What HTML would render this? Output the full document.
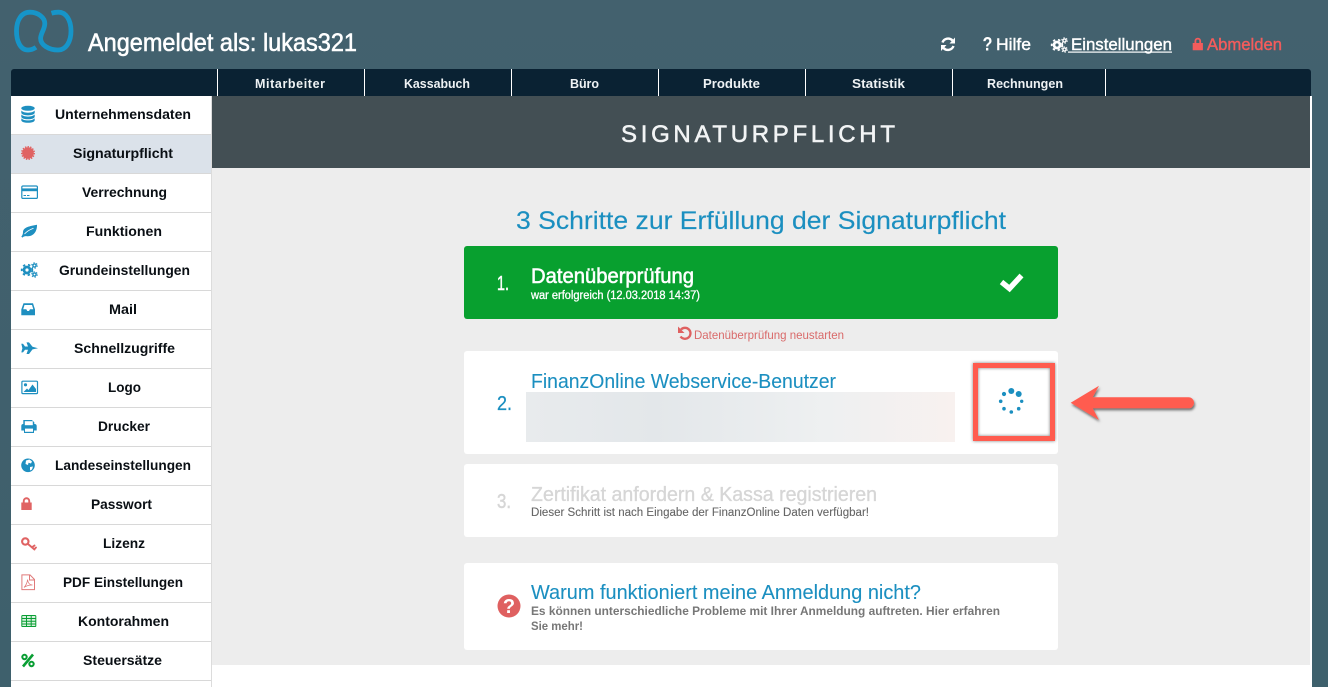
<!DOCTYPE html>
<html lang="de">
<head>
<meta charset="utf-8">
<title>Signaturpflicht</title>
<style>
html,body{margin:0;padding:0;width:1328px;height:687px;overflow:hidden;background:#40616e}
svg{display:block}
text{font-family:"Liberation Sans",sans-serif}
.side text{font-weight:bold;font-size:14px;fill:#0a0f14}
.nav text{font-weight:bold;font-size:12.5px;fill:#eef2f4}
.bl{fill:#1e8fc0}
.rd{fill:#e06363}
</style>
</head>
<body>
<svg xmlns="http://www.w3.org/2000/svg" width="1328" height="687" viewBox="0 0 1328 687">
<defs>
<linearGradient id="bg" x1="0" y1="0" x2="0" y2="1"><stop offset="0" stop-color="#43616e"/><stop offset="1" stop-color="#3e606c"/></linearGradient>
<linearGradient id="blur" x1="0" y1="0" x2="1" y2="0"><stop offset="0" stop-color="#e8ebed"/><stop offset=".3" stop-color="#e3e7ea"/><stop offset=".7" stop-color="#eef0f1"/><stop offset="1" stop-color="#f8f1ef"/></linearGradient>
<filter id="sh" x="-20%" y="-30%" width="140%" height="170%"><feDropShadow dx="1" dy="2" stdDeviation="1.2" flood-color="#000" flood-opacity=".55"/></filter>
<filter id="sh2" x="-10%" y="-10%" width="120%" height="120%"><feDropShadow dx="0" dy="0" stdDeviation="1.5" flood-color="#000" flood-opacity=".5"/></filter>
<g id="gears" fill="none" stroke="currentColor">
<circle cx="6" cy="7.5" r="3" stroke-width="2.8"/>
<circle cx="6" cy="7.5" r="5.3" stroke-width="1.8" stroke-dasharray="2.4 2.76"/>
<circle cx="13.5" cy="3" r="1.6" stroke-width="1.4"/>
<circle cx="13.5" cy="3" r="2.8" stroke-width="1" stroke-dasharray="1.3 1.64"/>
<circle cx="13.5" cy="12" r="1.6" stroke-width="1.4"/>
<circle cx="13.5" cy="12" r="2.8" stroke-width="1" stroke-dasharray="1.3 1.64"/>
</g>
</defs>

<rect width="1328" height="687" fill="url(#bg)"/>

<!-- logo -->
<path d="M36,47.3C33.5,49 31,50 28,50C20.5,50 16.5,41.5 16.5,31C16.5,20 21.5,12.2 30,12.2C38,12.2 44.8,17.5 44.8,23.5C44.8,29.5 40.6,33 40.6,38.5C40.6,45 49,50 58,50C66.5,50 71,41 71,31C71,20 66,12.2 58.5,12.2C56,12.2 53.8,12.5 51.5,13.2" fill="none" stroke="#1695c9" stroke-width="4.8"/>
<text x="88" y="51" font-size="25" fill="#fff" stroke="#fff" stroke-width=".55" textLength="269" lengthAdjust="spacingAndGlyphs">Angemeldet als: lukas321</text>

<!-- top actions -->
<g fill="none" stroke="#fff" stroke-width="2.4">
<path d="M942.5,42.5A6,6 0 0 1 952.5,40.5"/>
<path d="M953.5,46A6,6 0 0 1 943.5,48"/>
</g>
<path d="M955,37.5V43.5H949.5ZM941,51V45H946.5Z" fill="#fff"/>
<text x="982.5" y="50.5" font-size="19" font-weight="bold" fill="#fff" textLength="10" lengthAdjust="spacingAndGlyphs">?</text>
<text x="996" y="50" font-size="17" fill="#fff" stroke="#fff" stroke-width=".4" textLength="35" lengthAdjust="spacingAndGlyphs">Hilfe</text>
<use href="#gears" x="1051" y="37.5" color="#fff"/>
<text x="1071" y="50" font-size="17" fill="#fff" stroke="#fff" stroke-width=".4" textLength="101" lengthAdjust="spacingAndGlyphs">Einstellungen</text>
<rect x="1068" y="51.5" width="104" height="1.2" fill="#fff"/>
<path d="M1192.7,43h10.2v7.2h-10.2zM1194.5,43v-2a3,3 0 0 1 6.6,0v2h-1.8v-2a1.5,1.5 0 0 0 -3,0v2z" fill="#f35c5c"/>
<text x="1207" y="50" font-size="17" fill="#f35c5c" stroke="#f35c5c" stroke-width=".4" textLength="75" lengthAdjust="spacingAndGlyphs">Abmelden</text>

<!-- nav -->
<path d="M11,96V72a3,3 0 0 1 3,-3H1308a3,3 0 0 1 3,3V96Z" fill="#0a2233"/>
<g fill="#fff">
<rect x="217" y="69" width="1" height="27"/><rect x="364" y="69" width="1" height="27"/><rect x="511" y="69" width="1" height="27"/><rect x="658" y="69" width="1" height="27"/><rect x="805" y="69" width="1" height="27"/><rect x="952" y="69" width="1" height="27"/><rect x="1105" y="69" width="1" height="27"/>
</g>
<g class="nav">
<text x="255" y="88" textLength="70" lengthAdjust="spacing">Mitarbeiter</text>
<text x="404" y="88" textLength="66" lengthAdjust="spacingAndGlyphs">Kassabuch</text>
<text x="570" y="88" textLength="29" lengthAdjust="spacing">Büro</text>
<text x="703" y="88" textLength="57" lengthAdjust="spacingAndGlyphs">Produkte</text>
<text x="852" y="88" textLength="53" lengthAdjust="spacingAndGlyphs">Statistik</text>
<text x="987" y="88" textLength="76" lengthAdjust="spacingAndGlyphs">Rechnungen</text>
</g>

<!-- sidebar -->
<rect x="11" y="96" width="201" height="591" fill="#fff"/>
<rect x="11" y="135" width="200" height="38" fill="#dbe2ea"/>
<rect x="211" y="96" width="1" height="591" fill="#dcdcdc"/>
<g fill="#d8d8d8">
<rect x="11" y="134" width="200" height="1"/><rect x="11" y="173" width="200" height="1"/><rect x="11" y="212" width="200" height="1"/><rect x="11" y="251" width="200" height="1"/><rect x="11" y="290" width="200" height="1"/><rect x="11" y="329" width="200" height="1"/><rect x="11" y="368" width="200" height="1"/><rect x="11" y="407" width="200" height="1"/><rect x="11" y="446" width="200" height="1"/><rect x="11" y="485" width="200" height="1"/><rect x="11" y="524" width="200" height="1"/><rect x="11" y="563" width="200" height="1"/><rect x="11" y="602" width="200" height="1"/><rect x="11" y="641" width="200" height="1"/><rect x="11" y="680" width="200" height="1"/>
</g>
<g class="side">
<text x="55" y="119" textLength="136" lengthAdjust="spacingAndGlyphs">Unternehmensdaten</text>
<text x="73" y="158" textLength="100" lengthAdjust="spacingAndGlyphs">Signaturpflicht</text>
<text x="82" y="197" textLength="85" lengthAdjust="spacingAndGlyphs">Verrechnung</text>
<text x="86" y="236" textLength="76" lengthAdjust="spacingAndGlyphs">Funktionen</text>
<text x="59" y="275" textLength="131" lengthAdjust="spacingAndGlyphs">Grundeinstellungen</text>
<text x="109" y="314" textLength="28" lengthAdjust="spacingAndGlyphs">Mail</text>
<text x="74" y="353" textLength="101" lengthAdjust="spacingAndGlyphs">Schnellzugriffe</text>
<text x="108" y="392" textLength="33" lengthAdjust="spacingAndGlyphs">Logo</text>
<text x="98" y="431" textLength="52" lengthAdjust="spacingAndGlyphs">Drucker</text>
<text x="55" y="470" textLength="136" lengthAdjust="spacingAndGlyphs">Landeseinstellungen</text>
<text x="91" y="509" textLength="61" lengthAdjust="spacingAndGlyphs">Passwort</text>
<text x="103" y="548" textLength="42" lengthAdjust="spacingAndGlyphs">Lizenz</text>
<text x="63" y="587" textLength="120" lengthAdjust="spacingAndGlyphs">PDF Einstellungen</text>
<text x="78" y="626" textLength="91" lengthAdjust="spacingAndGlyphs">Kontorahmen</text>
<text x="83" y="665" textLength="79" lengthAdjust="spacingAndGlyphs">Steuersätze</text>
</g>

<!-- sidebar icons -->
<g class="bl">
<ellipse cx="28" cy="108.3" rx="6.7" ry="2.5"/>
<path d="M21.3,110.5v2.3c0,1.5 3,2.6 6.7,2.6s6.7,-1.1 6.7,-2.6v-2.3c-1,1.4 -3.6,2.2 -6.7,2.2s-5.7,-.8 -6.7,-2.2z"/>
<path d="M21.3,114.4v2.3c0,1.5 3,2.6 6.7,2.6s6.7,-1.1 6.7,-2.6v-2.3c-1,1.4 -3.6,2.2 -6.7,2.2s-5.7,-.8 -6.7,-2.2z"/>
<path d="M21.3,118.2v2c0,1.5 3,2.5 6.7,2.5s6.7,-1 6.7,-2.5v-2c-1,1.4 -3.6,2.2 -6.7,2.2s-5.7,-.8 -6.7,-2.2z"/>
</g>
<circle cx="28" cy="153" r="5.8" fill="#e06363"/>
<circle cx="28" cy="153" r="6.3" fill="none" stroke="#e06363" stroke-width="1.4" stroke-dasharray="1.4 1.24"/>
<g>
<rect x="21.8" y="186" width="15.6" height="12.4" rx="1.2" fill="#fff" stroke="#1e8fc0" stroke-width="1.2"/>
<rect x="22" y="188.4" width="15" height="2.8" fill="#1e8fc0"/>
<rect x="23.5" y="195" width="2.5" height="1" fill="#1e8fc0"/><rect x="27" y="195" width="2.5" height="1" fill="#1e8fc0"/>
</g>
<path class="bl" d="M37,224.8C37.2,232 33,236.8 27,236.2C25,236 24,236.2 22.4,237.6L21.3,236.6C22.5,235.2 23,234 23,232C23.5,227 30,226.2 37,224.8Z"/>
<path d="M24.5,234C27,231 30,229.5 33.5,228.2" fill="none" stroke="#fff" stroke-width=".8"/>
<use href="#gears" x="21" y="262.5" color="#1e8fc0"/>
<path class="bl" d="M23.5,303.3H33L35,309.5V315.3H21.3V309.5Z"/>
<path d="M24.5,305H32L33.3,309.3H30L29,311H27.3L26.3,309.3H23.2Z" fill="#fff"/>
<path class="bl" d="M21.3,343.8H23L25,346.5H28L26.5,342.4H29L32.5,346.8L38,348.2L32.5,349.4L29,354H26.5L28,349.8H25L23,352.4H21.3L22.4,348.2Z"/>
<rect x="21.9" y="381.2" width="15.6" height="12.4" rx="1" fill="#fff" stroke="#1e8fc0" stroke-width="1.2"/>
<circle cx="25.5" cy="384.8" r="1.6" fill="#1e8fc0"/>
<path class="bl" d="M23.5,392L27,388.5L28.5,390L32.5,384.5L36,389V392Z"/>
<path class="bl" d="M21.3,426a2,2 0 0 1 2,-2V420h8.6l2.4,2.2V424a2,2 0 0 1 2.4,2V430.5H34V433H24V430.5H21.3Z"/>
<rect x="24.8" y="421.2" width="8" height="4" fill="#fff"/><rect x="25" y="428.6" width="8" height="3.2" fill="#fff"/>
<circle cx="28" cy="465.3" r="6.8" fill="#1e8fc0"/>
<path d="M26,460.5L29.5,459.5L32,461.5L31,463.5L28.5,462.8L28,465L25.5,464ZM30,467L33,466.5L32,469.5L30,470.5Z" fill="#fff"/>
<path class="rd" d="M21.3,502.5H31.7V510H21.3ZM22.8,502.5V501a3.7,3.7 0 0 1 7.4,0v1.5h-1.9V501a1.8,1.8 0 0 0 -3.6,0v1.5Z"/>
<g fill="none" stroke="#e06363" stroke-linecap="round">
<circle cx="25.3" cy="541.5" r="3.2" stroke-width="2.1"/>
<path d="M28,544L34.5,549.5M32,547.3L34.5,545.5M34.3,549.2L36,547.5" stroke-width="1.9"/>
</g>
<path d="M21.9,574.9H30L34.5,579.5V589.6H21.9ZM29.5,575V580H34.5" fill="#fff" stroke="#e07a7a" stroke-width="1"/>
<path d="M24,587.5C26,585.5 27.5,582 27.5,579.5C28,583 29.5,585 32.5,585C30,585 26.5,585.5 24,587.5Z" fill="none" stroke="#e07a7a" stroke-width=".8"/>
<g fill="none" stroke="#0a9e34">
<rect x="21.8" y="615.5" width="14" height="11" rx=".8" fill="#d9f2df" stroke-width="1"/>
<path d="M22,618.5H35.6M22,621.3H35.6M22,624H35.6M26.5,616V626M31.2,616V626" stroke-width="1"/>
</g>
<g fill="none" stroke="#0a9e34">
<circle cx="24.5" cy="657" r="2.2" stroke-width="2"/>
<circle cx="31.5" cy="664" r="2.2" stroke-width="2"/>
<path d="M33,654.5L23,666.5" stroke-width="2.6"/>
</g>

<!-- main -->
<rect x="212" y="96" width="1098" height="72" fill="#434f54"/>
<rect x="212" y="168" width="1098" height="497" fill="#ededed"/>
<rect x="1310" y="96" width="2" height="591" fill="#fff"/>
<rect x="212" y="665" width="1100" height="22" fill="#fff"/>
<text x="621" y="142" fill="#f2f4f5" stroke="#f2f4f5" stroke-width=".55" textLength="274" lengthAdjust="spacing" style="font-size:24px">SIGNATURPFLICHT</text>
<text x="516" y="229" font-size="25" fill="#1b8fc0" stroke="#1b8fc0" stroke-width=".15" textLength="490" lengthAdjust="spacingAndGlyphs">3 Schritte zur Erfüllung der Signaturpflicht</text>

<!-- step 1 -->
<rect x="464" y="246" width="594" height="73" rx="3" fill="#08a02f"/>
<text x="497" y="290" font-size="20" fill="#fff" stroke="#fff" stroke-width=".5" textLength="12" lengthAdjust="spacingAndGlyphs">1.</text>
<text x="531" y="283" font-size="21" fill="#fff" stroke="#fff" stroke-width=".55" textLength="163" lengthAdjust="spacingAndGlyphs">Datenüberprüfung</text>
<text x="531" y="299" font-size="11.5" fill="#fff" stroke="#fff" stroke-width=".3" textLength="169" lengthAdjust="spacingAndGlyphs">war erfolgreich (12.03.2018 14:37)</text>
<path d="M1001.5,282L1009.5,288.5L1021.5,275.5" fill="none" stroke="#fff" stroke-width="5.4"/>

<!-- restart -->
<path d="M681,329.5A5.5,5.5 0 1 1 680.5,336.5" fill="none" stroke="#df6060" stroke-width="2.3"/>
<path d="M678,326.5V333H684.5Z" fill="#df6060"/>
<text x="694" y="339" font-size="12" fill="#d96a6a" textLength="150" lengthAdjust="spacingAndGlyphs">Datenüberprüfung neustarten</text>

<!-- step 2 -->
<rect x="464" y="351" width="594" height="103" rx="3" fill="#fff"/>
<text x="497" y="410" font-size="20" fill="#1b8fc0" stroke="#1b8fc0" stroke-width=".3" textLength="15" lengthAdjust="spacingAndGlyphs">2.</text>
<text x="531" y="388" font-size="20.5" fill="#1b8fc0" stroke="#1b8fc0" stroke-width=".1" textLength="305" lengthAdjust="spacingAndGlyphs">FinanzOnline Webservice-Benutzer</text>
<rect x="526" y="392" width="429" height="50" fill="url(#blur)"/>
<rect x="975.5" y="365.5" width="77" height="73" fill="none" stroke="#ff5b4f" stroke-width="5" filter="url(#sh2)"/>
<g fill="#1b8fc0">
<circle cx="1011.3" cy="391" r="3"/><circle cx="1018.7" cy="394" r="3"/><circle cx="1021.7" cy="401.3" r="1.7"/><circle cx="1018.7" cy="408.7" r="1.8"/><circle cx="1011.3" cy="412" r="1.8"/><circle cx="1004" cy="408.7" r="1.8"/><circle cx="1000.7" cy="401.3" r="1.8"/><circle cx="1004" cy="394" r="2.1"/>
</g>
<!-- arrow -->
<path d="M1070.7,402.7L1099,385.7L1092.7,397.3H1188.5a5.5,5.5 0 0 1 0,11H1092.7L1099,420Z" fill="#ff5b4f" filter="url(#sh)"/>

<!-- step 3 -->
<rect x="464" y="464" width="594" height="73" rx="3" fill="#fff"/>
<text x="497" y="508" font-size="20" fill="#d6d6d6" stroke="#d6d6d6" stroke-width=".5" textLength="14" lengthAdjust="spacingAndGlyphs">3.</text>
<text x="531" y="501" font-size="20.5" fill="#d6d6d6" stroke="#d6d6d6" stroke-width=".35" textLength="346" lengthAdjust="spacingAndGlyphs">Zertifikat anfordern &amp; Kassa registrieren</text>
<text x="531" y="516" font-size="11.5" fill="#666" stroke="#666" stroke-width=".1" textLength="338" lengthAdjust="spacingAndGlyphs">Dieser Schritt ist nach Eingabe der FinanzOnline Daten verfügbar!</text>

<!-- why -->
<rect x="464" y="563" width="594" height="87" rx="3" fill="#fff"/>
<circle cx="509" cy="606" r="11.5" fill="#df6060"/>
<text x="509" y="613" font-size="20" font-weight="bold" fill="#fff" text-anchor="middle">?</text>
<text x="531" y="599" font-size="20.5" fill="#1b8fc0" stroke="#1b8fc0" stroke-width=".1" textLength="390" lengthAdjust="spacingAndGlyphs">Warum funktioniert meine Anmeldung nicht?</text>
<text x="531" y="615" font-size="11.5" font-weight="bold" fill="#777" textLength="469" lengthAdjust="spacingAndGlyphs">Es können unterschiedliche Probleme mit Ihrer Anmeldung auftreten. Hier erfahren</text>
<text x="531" y="630" font-size="11.5" font-weight="bold" fill="#777" textLength="52" lengthAdjust="spacingAndGlyphs">Sie mehr!</text>
</svg>
</body>
</html>
